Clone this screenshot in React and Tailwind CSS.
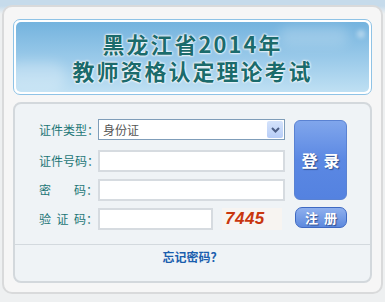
import React from 'react'

const cjk = { fontFamily: '"Noto Sans CJK SC", "Noto Sans", sans-serif' }

function Label({ chars }) {
  return (
    <div className="flex w-[59px] shrink-0 items-center text-[12px] leading-none text-[#1d7676]" style={cjk}>
      <div className="flex w-[48px] justify-between">
        {chars.map((c, i) => (
          <span key={i}>{c}</span>
        ))}
      </div>
      <span>：</span>
    </div>
  )
}

function TextBox({ className = 'w-[187px]' }) {
  return <div className={`h-[22px] border-2 border-[#d6dbe0] bg-white ${className}`} />
}

export default function App() {
  return (
    <div className="h-[302px] w-[385px] bg-[linear-gradient(#c6dbeb_0px,#c6dbeb_6px,#eef0f1_14px)] px-[2px] pt-[5px]" style={cjk}>
      {/* outer frame */}
      <div className="h-[289px] rounded-[10px] border-2 border-[#d9dadb] bg-[#f6f6f6] px-[9px] pt-[12px]">
        {/* title banner */}
        <div className="h-[76px] rounded-[7px] border border-[#8fc3e6] bg-white p-[2px]">
          <div className="relative flex h-full items-center justify-center overflow-hidden rounded-[5px] bg-[linear-gradient(#74b3de,#9ccbea_55%,#bfe0f3)]">
            <div className="absolute left-[-10px] top-[40px] h-[30px] w-[60px] rounded-full bg-white/25 blur-[6px]" />
            <div className="absolute right-[20px] top-[4px] h-[20px] w-[70px] rounded-full bg-white/20 blur-[6px]" />
            <div className="absolute right-[4px] top-[8px] h-[8px] w-[8px] rounded-full bg-white/40 blur-[2px]" />
            <div className="relative text-center text-[22px] font-bold leading-[27px] tracking-[2px] text-[#1b6b6c] [text-shadow:0_0_2px_#fff,0_0_2px_#fff,0_0_3px_#fff]">
              黑龙江省2014年
              <br />
              教师资格认定理论考试
            </div>
          </div>
        </div>

        {/* login panel */}
        <div className="mt-[7px] h-[181px] rounded-[8px] border-2 border-[#d3d8dc] bg-[#eff3f6]">
          <div className="flex pl-[24px] pt-[15px]">
            <div className="flex flex-col">
              <div className="flex h-[21px] items-center">
                <Label chars={['证', '件', '类', '型']} />
                <div className="flex h-[21px] w-[187px] items-center justify-between border border-[#7f9db9] bg-white pl-[4px] pr-[1px]">
                  <span className="text-[12px] text-[#555]">身份证</span>
                  <div className="flex h-[17px] w-[16px] items-center justify-center rounded-[2px] bg-[linear-gradient(#d5e3fb,#b7cdf7)]">
                    <svg width="9" height="6" viewBox="0 0 9 6">
                      <path d="M1 1l3.5 3.5L8 1" fill="none" stroke="#4d5f86" strokeWidth="2" />
                    </svg>
                  </div>
                </div>
              </div>
              <div className="mt-[10px] flex items-center">
                <Label chars={['证', '件', '号', '码']} />
                <TextBox />
              </div>
              <div className="mt-[7px] flex items-center">
                <Label chars={['密', '码']} />
                <TextBox />
              </div>
              <div className="mt-[7px] flex items-center">
                <Label chars={['验', '证', '码']} />
                <TextBox className="w-[115px]" />
                <div className="ml-[9px] flex h-[22px] w-[60px] items-center bg-[#f7f4f1] pl-[3px]">
                  <span
                    className="text-[17px] font-bold italic tracking-[0.5px] text-[#c9360d]"
                    style={{ fontFamily: '"Liberation Sans", Arial, sans-serif' }}
                  >
                    7445
                  </span>
                </div>
              </div>
            </div>

            <div className="ml-[9px] flex flex-col">
              <div className="mt-px flex h-[80px] w-[53px] items-center justify-center rounded-[6px] border border-[#5a82d2] bg-[linear-gradient(#80a6ec,#5b88e3_50%,#5482e0)] text-[16px] font-bold tracking-[6px] text-white [text-shadow:1px_1px_1px_#2f4f8f]">
                <span className="pl-[6px]">登录</span>
              </div>
              <div className="ml-px mt-[7px] flex h-[21px] w-[52px] items-center justify-center rounded-[7px] border border-[#3e69c2] bg-[linear-gradient(#8fb0ee,#5d89de)] text-[13px] font-bold tracking-[6px] text-white [text-shadow:1px_1px_1px_#2f4f8f]">
                <span className="pl-[6px]">注册</span>
              </div>
            </div>
          </div>

          <div className="mt-[14px] h-[1px] bg-[#d3d9de]" />
          <div className="pt-[3px] text-center text-[12px] font-bold text-[#1b5fae]">忘记密码？</div>
        </div>
      </div>
    </div>
  )
}
